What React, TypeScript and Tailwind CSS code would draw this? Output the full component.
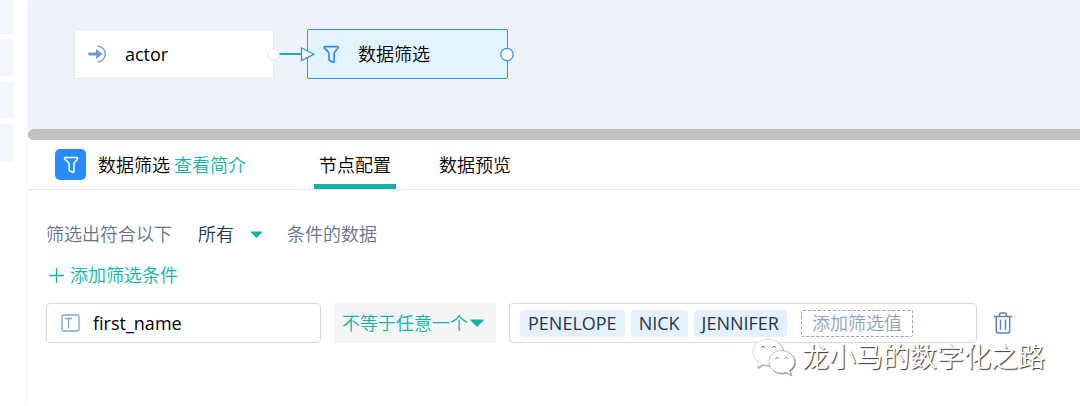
import type { ReactNode } from 'react'

const values = ['PENELOPE', 'NICK', 'JENNIFER']

function FilterIcon({ className }: { className?: string }) {
  return (
    <svg viewBox="0 0 18 20" fill="none" stroke="currentColor" strokeWidth="1.8" strokeLinejoin="round" className={className}>
      <path d="M2.6 1.6h12.8c1 0 1.400 1 .8 1.700-1.200 1.900-3.600 3.400-3.900 5.600v8.600c0 .7-.6 1-1.200.7l-3.700-1.800a1 1 0 0 1-.5-.9V9.200c0-2.500-3-3.900-4.900-5.900-.6-.7-.2-1.700.6-1.700z" />
    </svg>
  )
}

function SourceIcon() {
  return (
    <svg viewBox="0 0 20 18" fill="none" className="h-[18px] w-5 shrink-0">
      <path d="M9.5 1.2a7.8 7.8 0 1 1 0 15.6" stroke="#86a9da" strokeWidth="1.7" />
      <path d="M1.5 9h9" stroke="#6b9ad3" strokeWidth="2.8" strokeLinecap="round" />
      <path d="M8 4 14.500 9 8 14z" fill="#6b9ad3" />
    </svg>
  )
}

function Caret({ className }: { className: string }) {
  return (
    <svg viewBox="0 0 14 8" className={className}>
      <path d="M1 .5h12c.7 0 .9.6.5 1L7.7 7.3a1 1 0 0 1-1.4 0L.5 1.5C.1 1.1.3.5 1 .5z" fill="#10b3a3" />
    </svg>
  )
}

function TrashIcon() {
  return (
    <svg viewBox="0 0 18 22" fill="none" stroke="#5f83b8" strokeWidth="1.5" className="h-[22px] w-[18px]">
      <path d="M0 4.5h18M5.5 4.5V2.2c0-.8.5-1.2 1.2-1.2h4.6c.7 0 1.2.4 1.2 1.2v2.3M2.3 4.5v14.3c0 1.4.8 2.2 2.2 2.2h9c1.4 0 2.2-.8 2.2-2.2V4.5M6.5 7.5v10.3M11.5 7.5v10.3" />
    </svg>
  )
}

function WechatIcon() {
  return (
    <svg viewBox="0 0 44 38" className="h-[38px] w-11 drop-shadow-[1px_1px_0px_#999999]">
      <path
        d="M16 1C7.500 1 1 6.800 1 14c0 4.200 2.200 7.800 5.600 10.200L5 29.500l5.800-3c1.700.5 3.400.7 5.200.7C24.500 27.200 31 21.200 31 14S24.500 1 16 1z"
        fill="#fff"
        stroke="#d4d4d4"
        strokeWidth=".7"
      />
      <path
        d="M29.500 12.500C22.300 12.500 17 17.500 17 23.700S22.300 35 29.500 35c1.500 0 3-.2 4.400-.7l5 2.700-1.400-4.500c3-2.100 5-5.200 5-8.800 0-6.200-5.800-11.200-13-11.200z"
        fill="#fff"
        stroke="#a8a8a8"
        strokeWidth=".7"
      />
      <path d="M9 9.500q2-2.500 4 0M20 9.500q2-2.500 4 0M23.500 20.500q1.700-2.200 3.400 0M32.500 20.500q1.700-2.200 3.400 0" fill="none" stroke="#777" strokeWidth="1" />
    </svg>
  )
}

function Tab({ active, children }: { active?: boolean; children: ReactNode }) {
  return (
    <button
      role="tab"
      aria-selected={!!active}
      className={
        active
          ? 'h-full border-b-[5px] border-[#10b3a3] px-[5px] pt-[5px] whitespace-nowrap'
          : 'h-full border-b-[5px] border-transparent px-[5px] pt-[5px] whitespace-nowrap'
      }
    >
      {children}
    </button>
  )
}

function FlowCanvas() {
  return (
    <section className="relative h-[129px] overflow-hidden bg-[#eff2fa]">
      <div className="absolute top-[29px] left-[46px] flex h-[50px] w-[200px] items-center gap-[17px] rounded-xs border border-[#e6e8ec] bg-white pl-[13px]">
        <SourceIcon />
        <span>actor</span>
      </div>
      <div className="absolute top-[29px] left-[279px] flex h-[50px] w-[201px] items-center gap-[18px] rounded-xs border border-[#3391ff] bg-[#e2f4ff] pl-[14px]">
        <FilterIcon className="h-[19px] w-[18px] text-[#2d8cff]" />
        <span>数据筛选</span>
      </div>
      <svg viewBox="0 0 260 16" className="absolute top-[46px] left-[235px] h-4 w-[260px]" fill="#fff">
        <path d="M16 8h22" stroke="#10b3a3" strokeWidth="2" />
        <circle cx="10.500" cy="8.500" r="5.700" stroke="#e2e4e8" />
        <path d="M38.500 2v12.500L51 8.200z" stroke="#3391ff" strokeWidth="1.300" />
        <circle cx="244" cy="8.500" r="6.200" stroke="#3391ff" strokeWidth="1.300" />
      </svg>
    </section>
  )
}

function ConditionRow() {
  return (
    <div className="mt-4 flex items-center pr-[68px]">
      <label className="flex h-10 w-[275px] shrink-0 items-center gap-[13px] rounded-sm border border-[#d9d9d9] pl-[14px]">
        <svg viewBox="0 0 19 18" fill="none" className="h-[18px] w-[19px] shrink-0">
          <rect x="1" y="1" width="17" height="16" rx="1.500" stroke="#79a5dc" strokeWidth="1.300" />
          <path d="M4 4.500h7M7.500 4.500v10" stroke="#79a5dc" strokeWidth="1.300" />
        </svg>
        <input aria-label="字段" defaultValue="first_name" className="w-full min-w-0 bg-transparent outline-none" />
      </label>
      <label className="relative ml-[13px] flex h-10 w-[162px] shrink-0 items-center bg-[#f5f5f5]">
        <select aria-label="条件" className="h-full w-full appearance-none pl-2 text-[#10b3a3] outline-none">
          <option>不等于任意一个</option>
        </select>
        <Caret className="pointer-events-none absolute right-3 h-2 w-[14px]" />
      </label>
      <div className="ml-[13px] flex h-10 min-w-0 flex-1 items-center rounded-sm border border-[#d9d9d9] pl-[10px]">
        <ul className="flex gap-[6px]">
          {values.map((value) => (
            <li key={value} className="flex h-[27px] items-center rounded-sm bg-[#e4f1fc] px-2 text-[#26344d]">
              {value}
            </li>
          ))}
        </ul>
        <button className="ml-[14px] flex h-[27px] items-center rounded-xs border border-dashed border-[#91a3c0] px-[10px] whitespace-nowrap text-[#93a1b8]">
          添加筛选值
        </button>
      </div>
      <button aria-label="删除" className="ml-[17px] shrink-0">
        <TrashIcon />
      </button>
    </div>
  )
}

export default function App() {
  return (
    <div className="flex min-h-screen bg-white font-['Open_Sans','Noto_Sans_CJK_SC_DemiLight','Noto_Sans_CJK_SC_Light','Noto_Sans_CJK_SC',sans-serif] text-lg leading-6 font-normal text-black">
      <aside className="flex w-7 shrink-0 flex-col gap-[5px] pr-[15px]">
        <div className="h-[34px] bg-[#f3f6ff]" />
        <div className="h-[37px] bg-[#f3f6ff]" />
        <div className="h-[38px] bg-[#f3f6ff]" />
        <div className="h-[37px] bg-[#f3f6ff]" />
      </aside>
      <main className="relative min-w-0 flex-1 shadow-[0_0_6px_#0000000d]">
        <FlowCanvas />
        <div className="h-[11px] rounded-l-full bg-[#c1c1c1]" />
        <header className="flex h-[50px] items-center border-b border-[#e6e8eb] pl-[27px]">
          <div className="flex h-[31px] w-[31px] items-center justify-center rounded-[5px] bg-[#268cff] text-white">
            <FilterIcon className="h-[18px] w-4" />
          </div>
          <h1 className="ml-3">数据筛选</h1>
          <a href="#intro" className="ml-1 text-[#10b3a3]">
            查看简介
          </a>
          <div role="tablist" className="ml-[68px] flex h-full gap-[38px]">
            <Tab active>节点配置</Tab>
            <Tab>数据预览</Tab>
          </div>
        </header>

        <section className="pt-8 pb-6 pl-[18px]">
          <div className="flex items-center text-[#68738a]">
            <span>筛选出符合以下</span>
            <label className="relative ml-[26px] flex items-center">
              <select aria-label="匹配方式" className="w-[65px] appearance-none text-[#26344d] outline-none">
                <option>所有</option>
                <option>任一</option>
              </select>
              <Caret className="pointer-events-none absolute right-0 h-[7px] w-[13px]" />
            </label>
            <span className="ml-[24px]">条件的数据</span>
          </div>
          <button className="mt-[17px] flex items-center gap-[6px] pl-[3px] text-[#10b3a3]">
            <svg viewBox="0 0 15 15" stroke="currentColor" strokeWidth="1.300" className="h-[15px] w-[15px]">
              <path d="M7.500 0v15M0 7.500h15" />
            </svg>
            添加筛选条件
          </button>
          <ConditionRow />
        </section>

        <div className="pointer-events-none absolute top-[337px] right-[35px] flex items-center gap-[6px] text-[27px] leading-10 font-light whitespace-nowrap text-white [text-shadow:1px_1px_1px_#333333]">
          <WechatIcon />
          龙小马的数字化之路
        </div>
      </main>
    </div>
  )
}
